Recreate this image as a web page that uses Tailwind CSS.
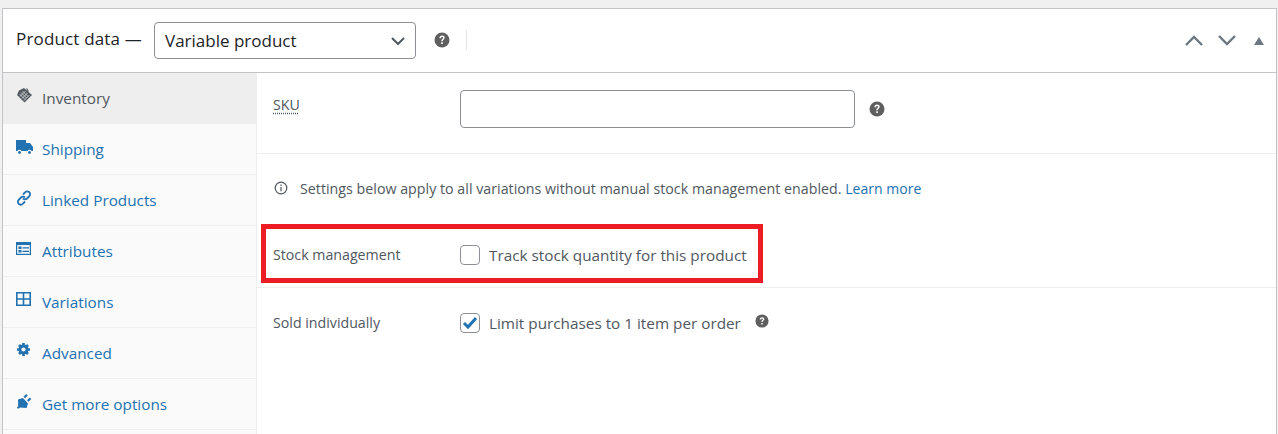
<!DOCTYPE html>
<html lang="en">
<head>
    <meta charset="UTF-8">
    <title>Product data</title>
    <script src="https://cdn.jsdelivr.net/npm/@tailwindcss/browser@4"></script>
</head>
<body class="bg-[#f0f0f1] h-[434px] overflow-hidden font-['Open_Sans','Noto_Sans',sans-serif] text-[14px] text-[#50575e]">
    <div class="relative mt-2 ml-[2px] mr-[1px] h-[426px] bg-white border-t border-x border-[#c3c4c7]">

        <!-- Header -->
        <div class="flex items-center h-[64px] pl-[13px] pr-[12px] border-b border-[#c3c4c7] text-[#1d2327]">
            <span class="text-[17px] font-medium tracking-[0.16px] mb-[4px] w-[138px] whitespace-nowrap">Product data —</span>
            <div class="flex items-center justify-between w-[262px] h-[37px] px-[10px] border border-[#8c8f94] rounded-[4px]">
                <span class="text-[17px] font-medium">Variable product</span>
                <svg class="w-[14px] h-[8px]" viewBox="0 0 14 8" fill="none" stroke="#50575e" stroke-width="2"><path d="M1 1l6 6 6-6"/></svg>
            </div>
            <svg class="ml-[18px] mb-[2px] w-[16px] h-[16px]" viewBox="0 0 16 16">
                <circle cx="8" cy="8" r="7.5" fill="#5f5f5f"/>
                <path d="M5.4 6.200c0-1.600 1.100-2.600 2.700-2.600s2.600.9 2.600 2.200c0 1.900-2 1.900-2 3.400H7.200c0-2.200 1.800-2.200 1.800-3.300 0-.5-.4-.9-1-.9s-1 .4-1 1.200zM7.200 10.300h1.600v1.800H7.200z" fill="#fff"/>
            </svg>
            <span class="ml-[16px] mb-[2px] w-px h-[20px] bg-[#e4e4e4]"></span>
            <div class="ml-auto flex items-center">
                <svg class="w-[18px] h-[11px]" viewBox="0 0 18 11" fill="none" stroke="#6c7781" stroke-width="2.4"><path d="M1 10l8-8 8 8"/></svg>
                <svg class="ml-[15px] w-[18px] h-[11px]" viewBox="0 0 18 11" fill="none" stroke="#6c7781" stroke-width="2.4"><path d="M1 1l8 8 8-8"/></svg>
                <svg class="ml-[18px] w-[10px] h-[8px]" viewBox="0 0 10 8"><path d="M5 0l5 8H0z" fill="#6c7781"/></svg>
            </div>
        </div>

        <div class="flex h-[362px]">
            <!-- Tabs -->
            <ul class="w-[254px] bg-[#fafafa] border-r border-[#eee] text-[#2271b1] text-[15.3px]">
                <li class="flex items-center h-[51px] pl-[13px] bg-[#eee] text-[#50575e]">
                    <svg class="w-[17px] h-[17px] mb-[6px]" viewBox="0 0 17 17">
                        <path d="M8 1l8 7-7.500 7.500L1 8 3 3.500z" fill="#50575e"/>
                        <path d="M3.500 7l5.500 5.500M5 5.500l5.500 5.500M6.500 4l5.500 5.500M4 9.500L9.500 4M6 11.500l5.500-5.500M8 13.500l5.500-5.500" stroke="#eee" stroke-width=".7"/>
                        <path d="M10.500 1.500l2 3" stroke="#50575e" stroke-width="1.200"/>
                    </svg>
                    <span class="ml-[9px]">Inventory</span>
                </li>
                <li class="flex items-center h-[51px] pl-[12px] border-b border-[#eee]">
                    <svg class="w-[18px] h-[14px] mb-[5px]" viewBox="0 0 18 14" fill="#2271b1">
                        <path d="M1 0h10v3h4l3 4v4h-1.500a2.200 2.200 0 0 0-4 0H6.500a2.200 2.200 0 0 0-4 0H1z"/>
                        <circle cx="4.500" cy="12.500" r="1.400"/><circle cx="14.500" cy="12.500" r="1.400"/>
                    </svg>
                    <span class="ml-[9px]">Shipping</span>
                </li>
                <li class="flex items-center h-[51px] pl-[13px] border-b border-[#eee]">
                    <svg class="w-[16px] h-[16px] mb-[5px]" viewBox="0 0 16 16" fill="none" stroke="#2271b1" stroke-width="1.800">
                        <path d="M7 4.500l2-2a2.800 2.800 0 0 1 4.500 3.500l-2.500 2.500a2.800 2.800 0 0 1-4 0"/>
                        <path d="M9 11.500l-2 2A2.800 2.800 0 0 1 2.500 10L5 7.500a2.800 2.800 0 0 1 4 0"/>
                    </svg>
                    <span class="ml-[10px]">Linked Products</span>
                </li>
                <li class="flex items-center h-[51px] pl-[13px] border-b border-[#eee]">
                    <svg class="w-[16px] h-[14px] mb-[5px]" viewBox="0 0 16 14">
                        <path d="M0 0h15v13H0z" fill="#2271b1"/>
                        <path d="M1.200 3h12.600v8.800H1.200z" fill="#f1f5f9"/>
                        <path d="M2.500 4.500h3v2.500h-3zM2.500 8h3v2.500h-3z" fill="#2271b1"/>
                        <path d="M6.500 5.200h6.500v1.200H6.500zM6.500 8.700h6.500v1.200H6.500z" fill="#2271b1"/>
                    </svg>
                    <span class="ml-[10px]">Attributes</span>
                </li>
                <li class="flex items-center h-[51px] pl-[13px] border-b border-[#eee]">
                    <svg class="w-[16px] h-[15px] mb-[5px]" viewBox="0 0 16 15" fill="none" stroke="#2271b1" stroke-width="1.600">
                        <path d="M.8.800h13.400v12.400H.8zM7.500.800v12.400M.8 7h13.400"/>
                    </svg>
                    <span class="ml-[10px]">Variations</span>
                </li>
                <li class="flex items-center h-[51px] pl-[13px] border-b border-[#eee]">
                    <svg class="w-[16px] h-[16px] mb-[6px]" viewBox="0 0 16 16">
                        <path d="M7.500 1v13M1 7.500h13M3 3l9 9M12 3l-9 9" stroke="#2271b1" stroke-width="2.600"/>
                        <circle cx="7.500" cy="7.500" r="5" fill="#2271b1"/>
                        <circle cx="7.500" cy="7.500" r="2.100" fill="#fafafa"/>
                    </svg>
                    <span class="ml-[10px]">Advanced</span>
                </li>
                <li class="flex items-center h-[51px] pl-[13px] border-b border-[#eee]">
                    <svg class="w-[16px] h-[15px] mb-[5px]" viewBox="0 0 16 15" fill="#2271b1">
                        <path d="M1.500 14.500l-.5-1 1.200-1.200L2 5.500 7 4l5 5.500-1.500 4.500-6.500-.5-1.200 1z"/>
                        <path d="M7.500 2.800L10.300 0l1.500 1.500-2.800 2.800zM11 6.300l2.800-2.800 1.500 1.500-2.800 2.800z"/>
                    </svg>
                    <span class="ml-[10px]">Get more options</span>
                </li>
            </ul>

            <!-- Panel -->
            <div class="flex-1 text-[14.2px]">
                <div class="flex items-center h-[81px] pl-[16px] border-b border-[#eee]">
                    <span class="w-[187px] mb-[16px]"><abbr class="underline decoration-dotted underline-offset-[2px]">SKU</abbr></span>
                    <div class="w-[395px] h-[38px] mb-[9px] border border-[#8c8f94] rounded-[4px]"></div>
                    <svg class="ml-[14px] mb-[9px] w-[16px] h-[16px]" viewBox="0 0 16 16">
                        <circle cx="8" cy="8" r="7.500" fill="#5f5f5f"/>
                        <path d="M5.400 6.200c0-1.600 1.100-2.600 2.700-2.600s2.600.9 2.600 2.200c0 1.900-2 1.900-2 3.400H7.200c0-2.200 1.800-2.200 1.800-3.300 0-.5-.4-.9-1-.9s-1 .4-1 1.200zM7.200 10.300h1.600v1.800H7.200z" fill="#fff"/>
                    </svg>
                </div>
                <div class="flex items-center h-[68px] pl-[17px]">
                    <svg class="w-[14px] h-[14px]" viewBox="0 0 14 14" fill="none" stroke="#50575e" stroke-width="1.200">
                        <circle cx="7" cy="7" r="5.800"/><path d="M7 6v4.200M7 3.600v1.300"/>
                    </svg>
                    <span class="ml-[12px] mt-[1px] whitespace-nowrap tracking-[0.03px]">Settings below apply to all variations without manual stock management enabled. <a class="text-[#2271b1] text-[14px]">Learn more</a></span>
                </div>
                <div class="flex items-center h-[66px] pl-[16px] border-b border-[#eee]">
                    <span class="w-[187px]">Stock management</span>
                    <span class="w-[20px] h-[20px] border border-[#8c8f94] rounded-[4px]"></span>
                    <span class="ml-[9px] mt-[1px] text-[15.3px]">Track stock quantity for this product</span>
                </div>
                <div class="flex items-center h-[70px] pl-[16px]">
                    <span class="w-[187px]">Sold individually</span>
                    <span class="flex items-center justify-center w-[20px] h-[20px] border border-[#8c8f94] rounded-[4px]">
                        <svg class="w-[16px] h-[14px]" viewBox="0 0 16 14" fill="none" stroke="#2271b1" stroke-width="3"><path d="M2 7l4 4 8-9"/></svg>
                    </span>
                    <span class="ml-[9px] text-[15.3px]">Limit purchases to 1 item per order</span>
                    <svg class="ml-[14px] mb-[5px] w-[14px] h-[14px]" viewBox="0 0 16 16">
                        <circle cx="8" cy="8" r="7.500" fill="#5f5f5f"/>
                        <path d="M5.400 6.200c0-1.600 1.100-2.600 2.700-2.600s2.600.9 2.600 2.200c0 1.900-2 1.900-2 3.400H7.200c0-2.200 1.800-2.200 1.800-3.300 0-.5-.4-.9-1-.9s-1 .4-1 1.200zM7.200 10.300h1.600v1.800H7.200z" fill="#fff"/>
                    </svg>
                </div>
            </div>
        </div>

        <!-- Red highlight drawn over the screenshot -->
        <div class="absolute left-[258px] top-[215px] w-[502px] h-[59px] border-[5px] border-[#ed1c24]"></div>
    </div>
</body>
</html>
